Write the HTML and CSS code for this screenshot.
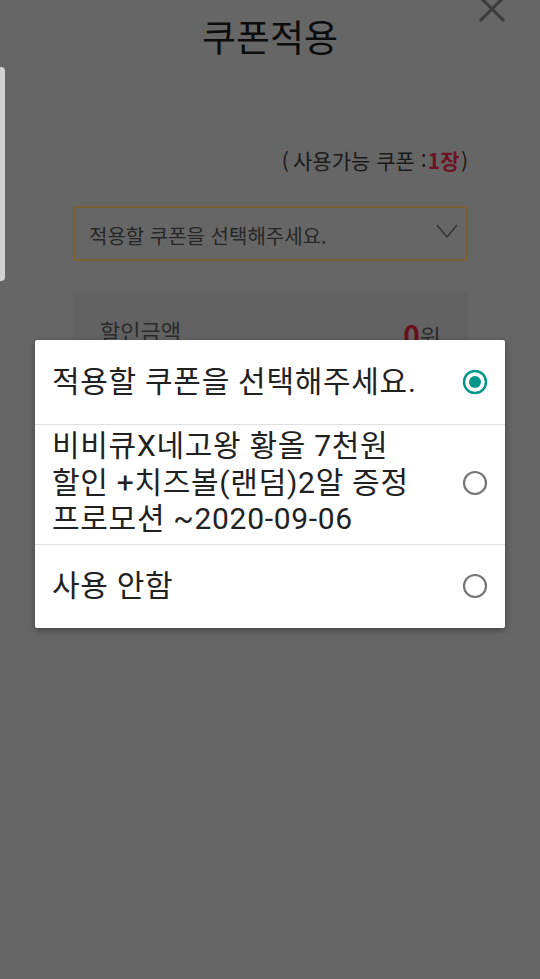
FILE: index.html
```html
<!DOCTYPE html>
<html lang="ko">
<head>
<meta charset="utf-8">
<title>쿠폰적용</title>
<link rel="stylesheet" href="styles.css">
</head>
<body>
<div class="page">
  <div class="side-tab"></div>
  <header class="header">
    <div></div>
    <h1 class="title">쿠폰적용</h1>
    <div class="close">
      <svg width="28" height="28" viewBox="0 0 28 28"><path d="M2 2 L26 26 M26 2 L2 26" stroke="#3b3b3b" stroke-width="3" fill="none"/></svg>
    </div>
  </header>
  <main class="content">
    <p class="count">(&#8201;사용가능 쿠폰 :&#8202;<span class="count-num">1장</span>&#8202;)</p>
    <div class="select">
      <span class="select-text">적용할 쿠폰을 선택해주세요.</span>
      <svg class="chev" width="22" height="14" viewBox="0 0 22 14"><path d="M1 1 L11 13 L21 1" stroke="#333" stroke-width="1.4" fill="none"/></svg>
    </div>
    <div class="discount">
      <span class="discount-label">할인금액</span>
      <span class="discount-val"><b>0</b>원</span>
    </div>
  </main>

  <div class="dialog">
    <div class="opt">
      <span class="opt-text">적용할 쿠폰을 선택해주세요.</span>
      <svg class="radio" width="28" height="28" viewBox="0 0 28 28"><circle cx="14" cy="14" r="11" stroke="#009688" stroke-width="2.4" fill="none"/><circle cx="14" cy="14" r="6" fill="#009688"/></svg>
    </div>
    <div class="opt opt-multi">
      <span class="opt-text">비비큐X네고왕 황올 7천원<br>할인 +치즈볼(랜덤)2알 증정<br>프로모션 ~2020-09-06</span>
      <svg class="radio" width="28" height="28" viewBox="0 0 28 28"><circle cx="14" cy="14" r="11" stroke="#767676" stroke-width="2.2" fill="none"/></svg>
    </div>
    <div class="opt">
      <span class="opt-text">사용 안함</span>
      <svg class="radio" width="28" height="28" viewBox="0 0 28 28"><circle cx="14" cy="14" r="11" stroke="#767676" stroke-width="2.2" fill="none"/></svg>
    </div>
  </div>
</div>
</body>
</html>
```

FILE: styles.css
```css
* { box-sizing: border-box; }
html, body {
  margin: 0;
  padding: 0;
  background: #666666;
}
body {
  font-family: Roboto, "Noto Sans CJK KR", sans-serif;
  width: 540px;
  height: 979px;
  overflow: hidden;
}
.page {
  position: relative;
  width: 540px;
  height: 979px;
}
.side-tab {
  position: absolute;
  left: 0;
  top: 67px;
  width: 5px;
  height: 214px;
  background: #d2d2d2;
  border-radius: 0 4px 4px 0;
}
.header {
  display: grid;
  grid-template-columns: 1fr auto 1fr;
  height: 74px;
  align-items: center;
}
.title {
  margin: 0;
  font-family: "Noto Sans CJK KR", sans-serif;
  font-weight: 400;
  font-size: 37px;
  line-height: 42px;
  color: #0c0c0c;
  padding-bottom: 2px;
}
.close {
  justify-self: end;
  align-self: start;
  margin-right: 34px;
  margin-top: -5px;
  height: 28px;
}
.close svg { display: block; }
.content {
  padding: 0 72px 0 73px;
}
.count {
  margin: 72px 0 0;
  text-align: right;
  font-family: "Noto Sans CJK KR", sans-serif;
  font-size: 21px;
  line-height: 28px;
  color: #1a1a1a;
}
.count-num {
  color: #6e1222;
  font-weight: 700;
}
.select {
  margin-top: 32px;
  height: 55px;
  border: 2px solid #7a6032;
  display: flex;
  align-items: center;
  justify-content: space-between;
  padding: 0 8px 0 14px;
}
.select-text {
  font-family: "Noto Sans CJK KR", sans-serif;
  font-size: 20px;
  color: #262626;
  padding-top: 3px;
}
.chev { display: block; margin-top: -6px; }
.discount {
  margin-top: 31px;
  height: 120px;
  background: #626262;
  display: flex;
  justify-content: space-between;
  align-items: flex-start;
  padding: 22px 27px 0 27px;
}
.discount-label {
  font-family: "Noto Sans CJK KR", sans-serif;
  font-size: 22px;
  color: #2a2a2a;
}
.discount-val {
  font-family: "Noto Sans CJK KR", sans-serif;
  font-size: 23px;
  color: #2a2a2a;
}
.discount-val b {
  color: #6a0e1c;
  font-size: 28px;
}
.dialog {
  position: absolute;
  left: 35px;
  top: 340px;
  width: 470px;
  background: #ffffff;
  border-radius: 2px;
  box-shadow: 0 2px 6px rgba(0, 0, 0, 0.35);
}
.opt {
  display: flex;
  align-items: center;
  justify-content: space-between;
  min-height: 84px;
  padding: 0 16px 0 17px;
  border-top: 1px solid #e0e0e0;
}
.opt:first-child { border-top: none; }
.opt-multi {
  min-height: 119px;
  padding-top: 3px;
  padding-bottom: 6px;
}
.opt-text {
  font-size: 30px;
  line-height: 36.5px;
  letter-spacing: 0.7px;
  color: #212121;
}
.radio { display: block; flex: none; }
```
